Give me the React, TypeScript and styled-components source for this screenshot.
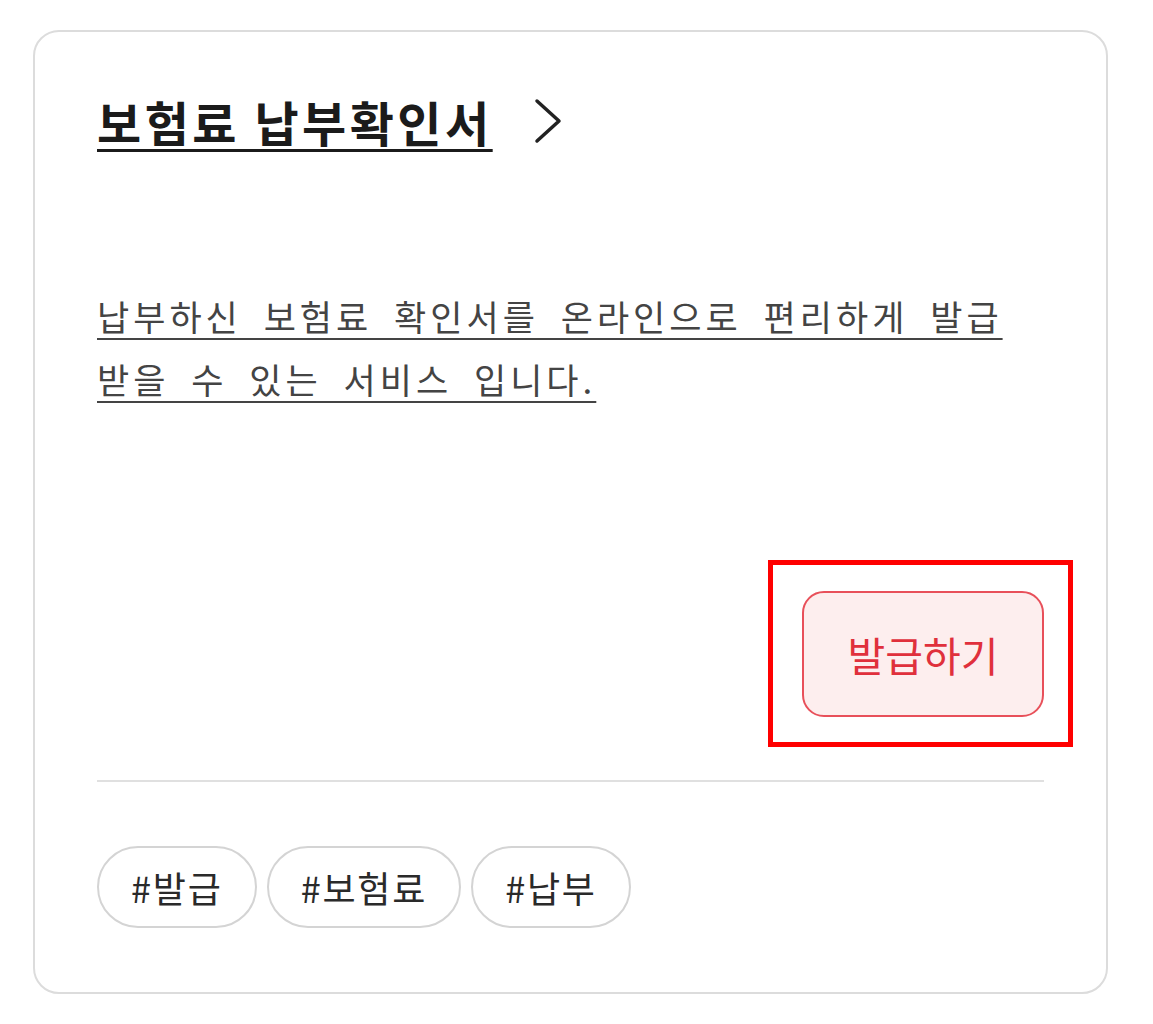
import React from "react";
import styled, { createGlobalStyle } from "styled-components";

const Global = createGlobalStyle`
  html, body { margin: 0; padding: 0; background: #ffffff; }
  body { font-family: "Noto Sans CJK KR", "Noto Sans", sans-serif; }
`;

const Page = styled.div`
  padding: 30px 0 0 33px;
`;

const Card = styled.section`
  box-sizing: border-box;
  width: 1075px;
  height: 964px;
  border: 2px solid #dcdcdc;
  border-radius: 26px;
  padding: 59px 62px 64px 62px;
  display: flex;
  flex-direction: column;
`;

const TitleRow = styled.a`
  display: flex;
  align-items: center;
  gap: 40px;
  height: 60px;
  color: #1b1b1b;
  text-decoration: none;
`;

const Title = styled.h2`
  margin: 0;
  font-size: 48px;
  font-weight: 700;
  line-height: 60px;
  letter-spacing: 3.5px;
  text-decoration: underline;
  text-decoration-thickness: 3px;
  text-underline-offset: 7px;
`;

const Description = styled.p`
  margin: 133px 0 0 0;
  font-size: 35px;
  line-height: 63px;
  letter-spacing: 4px;
  word-spacing: 10px;
  word-break: keep-all;
  color: #444444;
  text-decoration: underline;
  text-decoration-thickness: 2px;
  text-underline-offset: 7px;
`;

const ActionRow = styled.div`
  margin-top: auto;
  display: flex;
  justify-content: flex-end;
`;

const Highlight = styled.div`
  position: relative;
`;

const HighlightFrame = styled.span`
  position: absolute;
  top: -31px;
  right: -29px;
  bottom: -30px;
  left: -34px;
  border: 5px solid #ff0000;
  pointer-events: none;
`;

const IssueButton = styled.button`
  box-sizing: border-box;
  width: 242px;
  height: 126px;
  border: 2px solid #e8505a;
  border-radius: 22px;
  background: #fdeeee;
  color: #e0303c;
  font-family: "Noto Sans CJK KR", "Noto Sans", sans-serif;
  font-size: 41px;
  font-weight: 400;
  cursor: pointer;
`;

const Divider = styled.hr`
  margin: 63px 0 0 0;
  border: none;
  border-top: 2px solid #e0e0e0;
`;

const Tags = styled.div`
  margin-top: 64px;
  display: flex;
  gap: 10px;
`;

const Tag = styled.span`
  box-sizing: border-box;
  height: 82px;
  padding: 0 32px;
  display: inline-flex;
  align-items: center;
  border: 2px solid #d4d4d4;
  border-radius: 41px;
  font-size: 36px;
  letter-spacing: 1.8px;
  color: #2a2a2a;
`;

const Chevron = () => (
  <svg width="30" height="46" viewBox="0 0 30 46" fill="none">
    <path d="M4 3 L26 23 L4 43" stroke="#222" strokeWidth="3.5" strokeLinecap="round" strokeLinejoin="round" />
  </svg>
);

export default function App() {
  return (
    <>
      <Global />
      <Page>
        <Card>
          <TitleRow href="#">
            <Title>보험료 납부확인서</Title>
            <Chevron />
          </TitleRow>
          <Description>
            납부하신 보험료 확인서를 온라인으로 편리하게 발급 받을 수 있는 서비스 입니다.
          </Description>
          <ActionRow>
            <Highlight>
              <IssueButton>발급하기</IssueButton>
              <HighlightFrame />
            </Highlight>
          </ActionRow>
          <Divider />
          <Tags>
            {["#발급", "#보험료", "#납부"].map((t) => (
              <Tag key={t}>{t}</Tag>
            ))}
          </Tags>
        </Card>
      </Page>
    </>
  );
}
